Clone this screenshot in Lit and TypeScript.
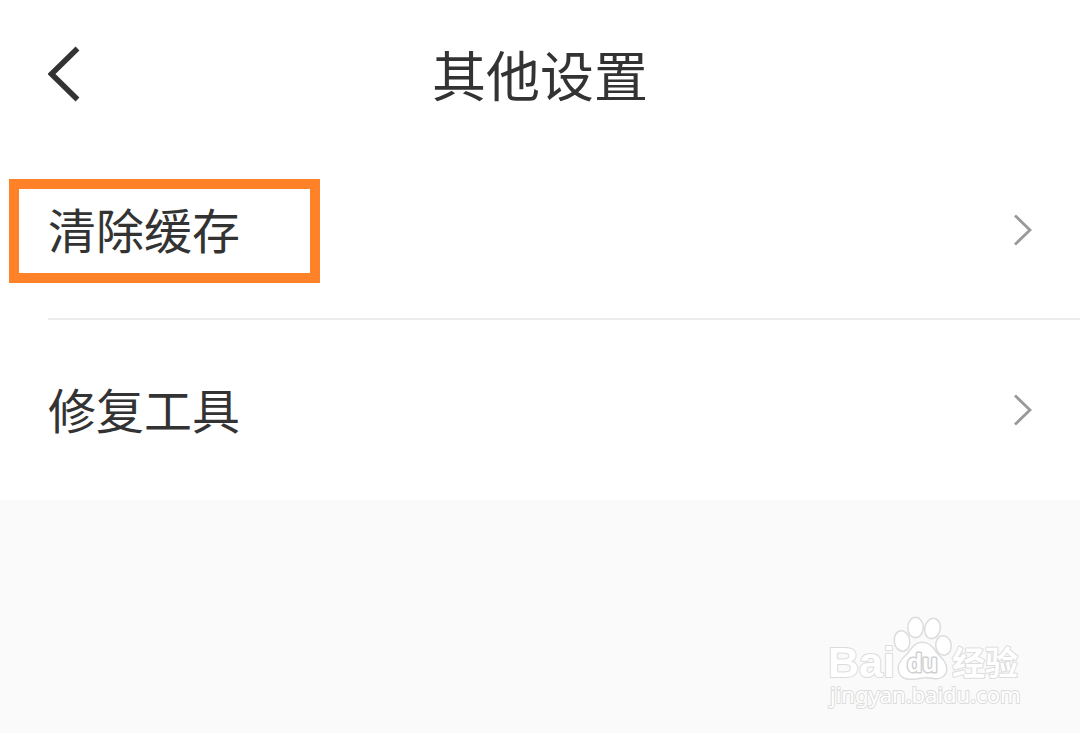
import { LitElement, html, css, svg } from "lit";
import { customElement, property, state } from "lit/decorators.js";

@customElement("settings-row")
class SettingsRow extends LitElement {
  @property() label = "";
  @property({ type: Boolean, reflect: true }) marked = false;

  static styles = css`
    :host {
      display: block;
      position: relative;
    }
    .row {
      display: flex;
      align-items: center;
      justify-content: space-between;
      box-sizing: border-box;
      width: 100%;
      min-height: 180px;
      padding: 0 48px;
      border: 0;
      background: none;
      color: #333;
      font: inherit;
      font-size: 48px;
      line-height: 72px;
      text-align: left;
      cursor: pointer;
    }
    .label {
      padding-bottom: 4px;
    }
    .chevron {
      flex: none;
      width: 20px;
      height: 34px;
    }
    .mark {
      position: absolute;
      top: 39px;
      left: 9px;
      box-sizing: border-box;
      width: 311px;
      height: 104px;
      border: 10px solid #ff8228;
      pointer-events: none;
    }
  `;

  render() {
    return html`
      <button class="row" type="button">
        <span class="label">${this.label}</span>
        <svg class="chevron" viewBox="0 0 20 34" aria-hidden="true">
          <path d="M3 2.5 L18 17 L3 31.5" fill="none" stroke="#999" stroke-width="2.8" />
        </svg>
      </button>
      ${this.marked ? html`<span class="mark"></span>` : null}
    `;
  }
}

@customElement("site-watermark")
class SiteWatermark extends LitElement {
  static styles = css`
    :host {
      display: block;
    }
    .logo {
      display: block;
      width: 210px;
      height: 115px;
    }
    .shape,
    .word,
    .cjk,
    .address {
      fill: #fff;
      stroke: #dcdcdc;
      stroke-width: 2px;
      paint-order: stroke;
      stroke-linejoin: round;
    }
    .shape {
      stroke-width: 3px;
    }
    .word {
      font: bold 43px "Liberation Sans", sans-serif;
    }
    .du {
      font-size: 25px;
      stroke: #d0d0d0;
      stroke-width: 3px;
    }
    .cjk {
      font: bold 33px "Noto Sans CJK SC", sans-serif;
    }
    .address {
      font: 22px "Noto Sans", sans-serif;
    }
  `;

  render() {
    return html`
      <svg class="logo" viewBox="0 0 210 115" role="img" aria-label="Baidu 经验">
        ${svg`
          <text class="word" x="8" y="72">Bai</text>
          <ellipse class="shape" cx="82" cy="36" rx="7" ry="9.5" transform="rotate(-8 82 36)" />
          <ellipse class="shape" cx="95.5" cy="22.5" rx="7" ry="9.5" />
          <ellipse class="shape" cx="112.5" cy="23.5" rx="7" ry="9.5" transform="rotate(12 112.5 23.5)" />
          <ellipse class="shape" cx="123.5" cy="40.5" rx="7" ry="9" transform="rotate(-8 123.5 40.5)" />
          <path class="shape" d="M102 38 C109 38 113 43 116 48 C119 52 126 56 126 64 C126 70 121 73.5 115 73 C109 72 106 71.5 101 72.5 C96 73.5 91 74 86 73 C81 71.5 79 68 79 63 C79 57 84 53 88 49 C92 44 95 38 102 38 Z" />
          <text class="word du" x="87" y="67">du</text>
          <text class="cjk" x="132" y="70">经验</text>
          <text class="address" x="10" y="98">jingyan.baidu.com</text>
        `}
      </svg>
    `;
  }
}

@customElement("app-root")
class AppRoot extends LitElement {
  @state() private rows = [
    { label: "清除缓存", marked: true },
    { label: "修复工具", marked: false },
  ];

  static styles = css`
    :host {
      display: flex;
      flex-direction: column;
      min-height: 100vh;
      background: #fafafa;
      color: #333;
      font-family: "Noto Sans CJK SC", sans-serif;
    }
    .panel {
      background: #fff;
    }
    .header {
      display: grid;
      grid-template-columns: 1fr auto 1fr;
      align-items: center;
      box-sizing: border-box;
      min-height: 140px;
      padding: 8px 48px 0;
    }
    .back {
      justify-self: start;
      display: flex;
      padding: 0;
      border: 0;
      background: none;
      cursor: pointer;
    }
    .arrow {
      width: 34px;
      height: 56px;
    }
    .title {
      margin: 0;
      font-size: 54px;
      font-weight: 400;
      line-height: 80px;
    }
    .list {
      margin: 0;
      padding: 0;
      list-style: none;
    }
    .item + .item::before {
      content: "";
      display: block;
      height: 2px;
      margin: -2px 0 0 48px;
      background: #ececec;
    }
    .footer {
      display: flex;
      flex: 1;
      align-items: flex-end;
      justify-content: flex-end;
      padding: 0 50px 13px 0;
    }
  `;

  render() {
    return html`
      <main class="panel">
        <header class="header">
          <button class="back" type="button" aria-label="返回">
            <svg class="arrow" viewBox="0 0 34 56" aria-hidden="true">
              <path d="M29.5 2.5 L3.5 28 L29.5 53.5" fill="none" stroke="#333" stroke-width="5.5" />
            </svg>
          </button>
          <h1 class="title">其他设置</h1>
        </header>
        <ul class="list">
          ${this.rows.map(
            (r) => html`<li class="item"><settings-row .label=${r.label} ?marked=${r.marked}></settings-row></li>`
          )}
        </ul>
      </main>
      <footer class="footer"><site-watermark></site-watermark></footer>
    `;
  }
}
